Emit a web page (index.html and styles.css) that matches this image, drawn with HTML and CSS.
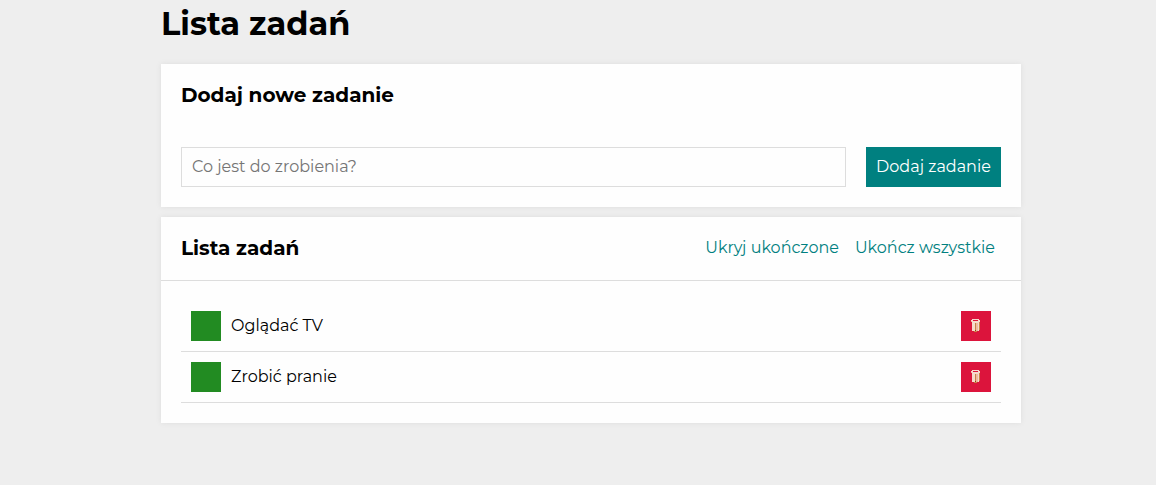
FILE: index.html
```html
<!DOCTYPE html>
<html lang="pl">
<head>
<meta charset="utf-8">
<meta name="viewport" content="width=device-width, initial-scale=1">
<title>Lista zadań</title>
<link rel="stylesheet" href="styles.css">
</head>
<body>
<svg class="sprite" aria-hidden="true">
  <symbol id="basket" viewBox="0 0 9 13" shape-rendering="crispEdges">
    <path fill="#f6d9cc" d="M1 0h7v1h1v2H8v9H6v1H3v-1H1V3H0V1h1z"/>
    <path fill="#dc143c" d="M2 1h5v1H2z"/>
    <path fill="#eeb9a0" d="M5 4h2v8H5zM0 2h1v1H0z"/>
    <path fill="#c98247" d="M4 4h1v7H4zM8 3h1v8H8zM3 12h3v1H3z"/>
    <path fill="#8e3a1c" d="M4 11h1v1H4z"/>
  </symbol>
</svg>
<main class="container">
  <h1 class="title">Lista zadań</h1>
  <section class="card">
    <header class="card-header">
      <h2 class="card-title">Dodaj nowe zadanie</h2>
    </header>
    <form class="form card-body">
      <input class="form-input" type="text" placeholder="Co jest do zrobienia?" aria-label="Nowe zadanie">
      <button class="form-button" type="submit">Dodaj zadanie</button>
    </form>
  </section>
  <section class="card">
    <header class="card-header card-header-lined">
      <h2 class="card-title">Lista zadań</h2>
      <div class="actions">
        <button class="action" type="button">Ukryj ukończone</button>
        <button class="action" type="button">Ukończ wszystkie</button>
      </div>
    </header>
    <ul class="tasks card-body">
      <li class="task">
        <button class="square done" type="button" aria-label="Oznacz jako ukończone"></button>
        <span>Oglądać TV</span>
        <button class="square remove" type="button" aria-label="Usuń"><svg class="icon"><use href="#basket"/></svg></button>
      </li>
      <li class="task">
        <button class="square done" type="button" aria-label="Oznacz jako ukończone"></button>
        <span>Zrobić pranie</span>
        <button class="square remove" type="button" aria-label="Usuń"><svg class="icon"><use href="#basket"/></svg></button>
      </li>
    </ul>
  </section>
</main>
</body>
</html>
```
FILE: styles.css
```css
* { box-sizing: border-box; }

body {
  margin: 0;
  padding-left: 26px;
  background: #eee;
  color: #000;
  font-family: Montserrat, Inter, "Noto Sans", sans-serif;
  font-size: 16px;
  font-weight: 400;
  line-height: 20px;
}

button, input { font: inherit; }
button { border: 0; cursor: pointer; }

.sprite { display: none; }

.container {
  max-width: 860px;
  margin: 0 auto;
}

.title {
  margin: 0;
  padding: 4px 0 20px;
  font-size: 32px;
  font-weight: 700;
  line-height: 40px;
}

.card {
  margin-bottom: 10px;
  background: #fefefe;
  box-shadow: 0 0 5px #ddd;
}

.card-header {
  display: flex;
  align-items: center;
  justify-content: space-between;
  padding: 20px;
}

.card-header-lined { border-bottom: 1px solid #ddd; }

.card-title {
  margin: 0;
  font-size: 20px;
  font-weight: 700;
  line-height: 23px;
}

.card-body { padding: 20px; }

.form {
  display: grid;
  grid-template-columns: 1fr 135px;
  gap: 20px;
}

.form-input {
  min-width: 0;
  height: 40px;
  padding: 0 10px 2px;
  border: 1px solid #ddd;
  background: transparent;
}

.form-input::placeholder { color: #757575; opacity: 1; }

.form-button {
  padding: 10px;
  background: #008080;
  color: #fff;
  white-space: nowrap;
}

.actions {
  display: flex;
  gap: 4px;
}

.action {
  padding: 0 6px 2px;
  background: transparent;
  color: #008080;
}

.tasks {
  margin: 0;
  list-style: none;
}

.task {
  display: grid;
  grid-template-columns: auto 1fr auto;
  align-items: center;
  gap: 10px;
  padding: 10px;
  border-bottom: 1px solid #ddd;
}

.square {
  display: flex;
  align-items: center;
  justify-content: center;
  width: 30px;
  height: 30px;
  padding: 0;
}

.done { background: #228b22; }
.remove { background: #dc143c; }

.icon {
  width: 9px;
  height: 13px;
  margin: 0 1px 1px 0;
}
```
